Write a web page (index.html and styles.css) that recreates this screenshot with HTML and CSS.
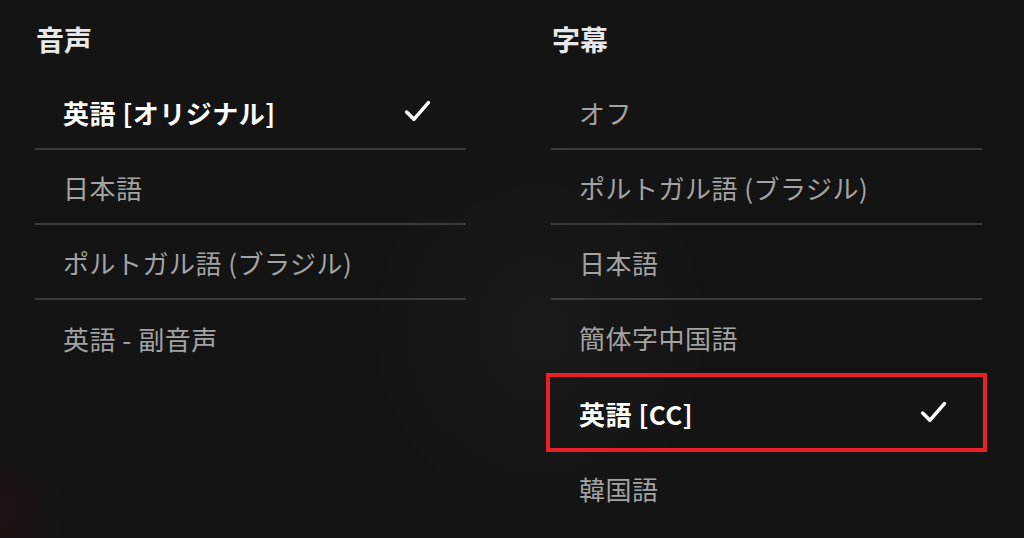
FILE: index.html
```html
<!DOCTYPE html>
<html lang="ja">
<head>
<meta charset="utf-8">
<link rel="stylesheet" href="styles.css">
</head>
<body>
<main class="panel">
  <section class="col">
    <h2 class="title">音声</h2>
    <ul class="list">
      <li class="item selected"><span>英語 [オリジナル]</span><svg class="check" viewBox="0 0 26 22"><path d="M2.5 11.5 L9.5 18.5 L23.5 2.5"/></svg></li>
      <li class="item"><span>日本語</span></li>
      <li class="item"><span>ポルトガル語 (ブラジル)</span></li>
      <li class="item last"><span>英語 - 副音声</span></li>
    </ul>
  </section>
  <section class="col">
    <h2 class="title">字幕</h2>
    <ul class="list">
      <li class="item"><span>オフ</span></li>
      <li class="item"><span>ポルトガル語 (ブラジル)</span></li>
      <li class="item"><span>日本語</span></li>
      <li class="item"><span>簡体字中国語</span></li>
      <li class="item selected boxed"><span>英語 [CC]</span><svg class="check" viewBox="0 0 26 22"><path d="M2.5 11.5 L9.5 18.5 L23.5 2.5"/></svg></li>
      <li class="item last"><span>韓国語</span></li>
    </ul>
  </section>
</main>
</body>
</html>
```
FILE: styles.css
```css
html, body {
  margin: 0;
  height: 100%;
}
body {
  background:
    radial-gradient(circle at 0px 510px, rgba(55, 12, 14, 0.35) 0, rgba(55, 12, 14, 0) 70px),
    radial-gradient(ellipse 180px 200px at 540px 330px, rgba(255, 255, 255, 0.025), rgba(255, 255, 255, 0) 100%),
    #141414;
  font-family: "Noto Sans CJK JP", "Noto Sans", sans-serif;
  color: #a3a3a3;
  overflow: hidden;
}
.panel {
  display: flex;
  gap: 85px;
  padding-left: 35px;
}
.col {
  width: 431px;
}
.title {
  margin: 0;
  height: 75px;
  padding-left: 1px;
  font-size: 28px;
  font-weight: 700;
  color: #e8e8e8;
  line-height: 78px;
  box-sizing: border-box;
}
.list {
  list-style: none;
  margin: 0;
  padding: 0;
}
.item {
  position: relative;
  height: 75px;
  box-sizing: border-box;
  border-bottom: 2px solid #3b3b3b;
  padding: 0 35px 0 28px;
  display: flex;
  align-items: center;
  justify-content: space-between;
  font-size: 26px;
  letter-spacing: 0.5px;
}
.item span {
  position: relative;
  top: 1px;
}
.item.last {
  border-bottom: none;
}
.item.selected {
  color: #ffffff;
  font-weight: 700;
}
.item.boxed {
  border-bottom: none;
}
.item.boxed::after {
  content: "";
  position: absolute;
  top: -2px;
  bottom: -2px;
  left: -5px;
  right: -5px;
  border: 4px solid #e8202a;
}
.check {
  width: 27px;
  height: 23px;
  fill: none;
  stroke: #ffffff;
  stroke-width: 3.4;
  stroke-linecap: round;
  stroke-linejoin: round;
}
```
